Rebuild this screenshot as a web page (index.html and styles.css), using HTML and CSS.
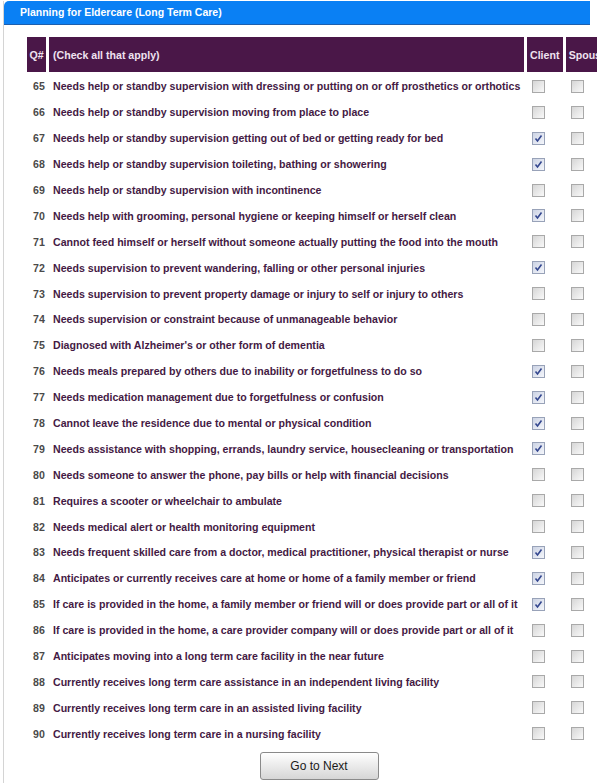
FILE: index.html
```html
<!DOCTYPE html>
<html>
<head>
    <title>Planning for Eldercare</title>
    <link rel="stylesheet" href="styles.css">
</head>
<body>
    <div class="panel">
        <div class="panel-title">Planning for Eldercare (Long Term Care)</div>
        <div class="panel-body">
            <table class="questions">
                <thead>
                    <tr>
                        <th class="num">Q#</th>
                        <th class="text">(Check all that apply)</th>
                        <th class="who">Client</th>
                        <th class="who">Spouse</th>
                    </tr>
                </thead>
                <tbody id="rows"></tbody>
            </table>
            <div class="actions">
                <button class="next-btn" type="button">Go to Next</button>
            </div>
        </div>
    </div>
    <script>
        const questions = [
            [65, 'Needs help or standby supervision with dressing or putting on or off prosthetics or orthotics', false],
            [66, 'Needs help or standby supervision moving from place to place', false],
            [67, 'Needs help or standby supervision getting out of bed or getting ready for bed', true],
            [68, 'Needs help or standby supervision toileting, bathing or showering', true],
            [69, 'Needs help or standby supervision with incontinence', false],
            [70, 'Needs help with grooming, personal hygiene or keeping himself or herself clean', true],
            [71, 'Cannot feed himself or herself without someone actually putting the food into the mouth', false],
            [72, 'Needs supervision to prevent wandering, falling or other personal injuries', true],
            [73, 'Needs supervision to prevent property damage or injury to self or injury to others', false],
            [74, 'Needs supervision or constraint because of unmanageable behavior', false],
            [75, "Diagnosed with Alzheimer's or other form of dementia", false],
            [76, 'Needs meals prepared by others due to inability or forgetfulness to do so', true],
            [77, 'Needs medication management due to forgetfulness or confusion', true],
            [78, 'Cannot leave the residence due to mental or physical condition', true],
            [79, 'Needs assistance with shopping, errands, laundry service, housecleaning or transportation', true],
            [80, 'Needs someone to answer the phone, pay bills or help with financial decisions', false],
            [81, 'Requires a scooter or wheelchair to ambulate', false],
            [82, 'Needs medical alert or health monitoring equipment', false],
            [83, 'Needs frequent skilled care from a doctor, medical practitioner, physical therapist or nurse', true],
            [84, 'Anticipates or currently receives care at home or home of a family member or friend', true],
            [85, 'If care is provided in the home, a family member or friend will or does provide part or all of it', true],
            [86, 'If care is provided in the home, a care provider company will or does provide part or all of it', false],
            [87, 'Anticipates moving into a long term care facility in the near future', false],
            [88, 'Currently receives long term care assistance in an independent living facility', false],
            [89, 'Currently receives long term care in an assisted living facility', false],
            [90, 'Currently receives long term care in a nursing facility', false]
        ];

        const check = '<svg viewBox="0 0 11 11" width="11" height="11"><path d="M2.5 5.5 L4.5 8 L8.5 2.5" fill="none" stroke="#34478f" stroke-width="1.6"/></svg>';

        function box(checked) {
            return '<span class="box' + (checked ? ' checked' : '') + '">' + (checked ? check : '') + '</span>';
        }

        const tbody = document.getElementById('rows');
        questions.forEach(q => {
            const tr = document.createElement('tr');
            tr.innerHTML =
                '<td class="num">' + q[0] + '</td>' +
                '<td class="text">' + q[1] + '</td>' +
                '<td class="who">' + box(q[2]) + '</td>' +
                '<td class="who">' + box(false) + '</td>';
            tbody.appendChild(tr);
        });
    </script>
</body>
</html>
```

FILE: styles.css
```css
body {
    margin: 0;
    background-color: #ffffff;
    font-family: "Liberation Sans", Arial, sans-serif;
    overflow: hidden;
}
.panel {
    width: 586px;
    margin: 1px 0 0 3px;
    border-left: 1px solid #d4d4d4;
    height: 790px;
}
.panel-title {
    background-color: #0a80f4;
    color: #ffffff;
    font-size: 10.5px;
    font-weight: bold;
    height: 23px;
    line-height: 23px;
    padding-left: 16px;
    border-bottom: 1px solid #1d5fae;
    border-top-left-radius: 5px;
}
.panel-body {
    width: 590px;
    padding: 9px 0 0 20px;
}
.questions {
    width: 590px;
    border-collapse: separate;
    border-spacing: 3px;
    font-size: 10.6px;
    font-weight: bold;
}
.questions th {
    background-color: #4a1748;
    color: #efe2f0;
    height: 35px;
    padding: 0;
    text-align: left;
    white-space: nowrap;
}
.questions th.num {
    width: 19px;
    text-align: center;
}
.questions th.text {
    width: 471px;
    padding-left: 4px;
}
.questions th.who {
    padding-left: 3px;
}
.questions td {
    height: 22.9px;
    padding: 0;
    color: #441a44;
    white-space: nowrap;
}
.questions td.num {
    color: #4a4a4a;
    padding-left: 6px;
}
.questions td.text {
    padding-left: 4px;
}
.questions td.who {
    padding-left: 5px;
    vertical-align: middle;
}
.box {
    display: block;
    width: 11px;
    height: 11px;
    border: 1px solid #a9a9a9;
    background: linear-gradient(135deg, #d6d6d6, #f9f9f9);
}
.box.checked {
    background: linear-gradient(135deg, #ccd3e4, #f4f6fb);
    border-color: #98a2b8;
}
.box svg {
    display: block;
}
.actions {
    text-align: center;
    padding-top: 4px;
}
.next-btn {
    width: 119px;
    height: 28px;
    font-family: "Liberation Sans", Arial, sans-serif;
    font-size: 12px;
    color: #1a1a1a;
    background: linear-gradient(#ffffff, #e6e6e6 60%, #d6d6d6);
    border: 1px solid #8a8a8a;
    border-radius: 3px;
    padding: 0;
}
```
